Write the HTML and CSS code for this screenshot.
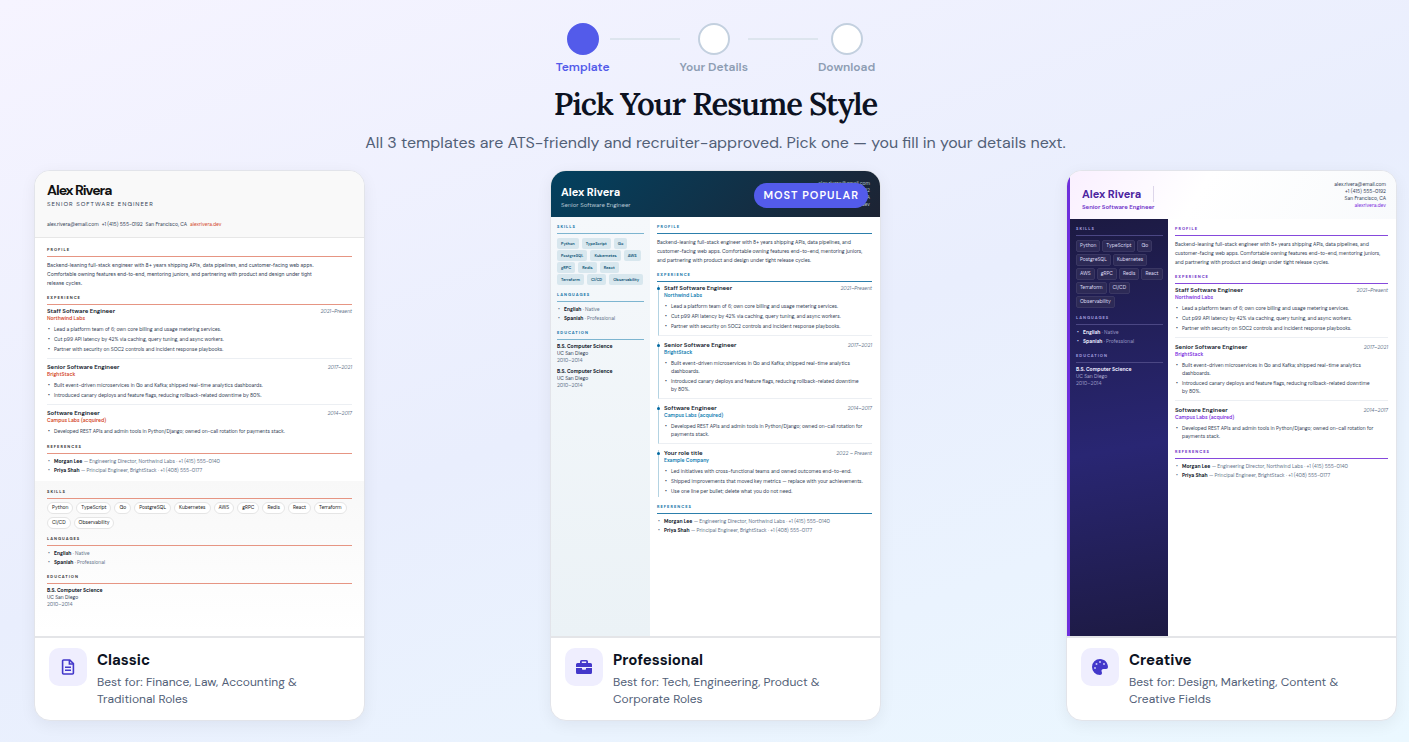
FILE: index.html
```html
<!DOCTYPE html>
<html lang="en">
<head>
  <meta charset="UTF-8">
  <meta name="viewport" content="width=device-width, initial-scale=1.0">
  <title>Pick Your Resume Style</title>
  <link rel="stylesheet" href="styles.css">
</head>
<body>

<div class="page">

  <!-- Progress steps -->
  <ol class="steps">
    <li class="step active"><span class="step-dot"></span><span class="step-label">Template</span></li>
    <li class="step-line"></li>
    <li class="step"><span class="step-dot"></span><span class="step-label">Your Details</span></li>
    <li class="step-line"></li>
    <li class="step"><span class="step-dot"></span><span class="step-label">Download</span></li>
  </ol>

  <h1>Pick Your Resume Style</h1>
  <p class="subtitle">All 3 templates are ATS-friendly and recruiter-approved. Pick one — you fill in your details next.</p>

  <div class="templates">

    <!-- Classic -->
    <article class="card">
      <div class="preview classic">
        <header class="cv-header">
          <div class="cv-name">Alex Rivera</div>
          <div class="cv-title">Senior Software Engineer</div>
          <div class="cv-contact">
            <span>alex.rivera@email.com</span><span>+1 (415) 555-0192</span><span>San Francisco, CA</span><span class="cv-site">alexrivera.dev</span>
          </div>
        </header>
        <div class="cv-main">
          <h3>Profile</h3>
          <p class="cv-text">Backend-leaning full-stack engineer with 8+ years shipping APIs, data pipelines, and customer-facing web apps. Comfortable owning features end-to-end, mentoring juniors, and partnering with product and design under tight release&nbsp;cycles.</p>
          <h3>Experience</h3>
          <div class="job">
            <div class="job-head"><strong>Staff Software Engineer</strong><em>2021–Present</em></div>
            <div class="company">Northwind Labs</div>
            <ul>
              <li>Lead a platform team of 6; own core billing and usage metering services.</li>
              <li>Cut p99 API latency by 42% via caching, query tuning, and async workers.</li>
              <li>Partner with security on SOC2 controls and incident response playbooks.</li>
            </ul>
          </div>
          <div class="job">
            <div class="job-head"><strong>Senior Software Engineer</strong><em>2017–2021</em></div>
            <div class="company">BrightStack</div>
            <ul>
              <li>Built event-driven microservices in Go and Kafka; shipped real-time analytics dashboards.</li>
              <li>Introduced canary deploys and feature flags, reducing rollback-related downtime by 80%.</li>
            </ul>
          </div>
          <div class="job">
            <div class="job-head"><strong>Software Engineer</strong><em>2014–2017</em></div>
            <div class="company">Campus Labs (acquired)</div>
            <ul>
              <li>Developed REST APIs and admin tools in Python/Django; owned on-call rotation for payments stack.</li>
            </ul>
          </div>
          <h3>References</h3>
          <ul class="plain">
            <li><strong>Morgan Lee</strong> — Engineering Director, Northwind Labs · +1 (415) 555-0140</li>
            <li><strong>Priya Shah</strong> — Principal Engineer, BrightStack · +1 (408) 555-0177</li>
          </ul>
        </div>
        <div class="cv-side">
          <h3>Skills</h3>
          <div class="tags">
            <span>Python</span><span>TypeScript</span><span>Go</span><span>PostgreSQL</span><span>Kubernetes</span><span>AWS</span><span>gRPC</span><span>Redis</span><span>React</span><span>Terraform</span><span>CI/CD</span><span>Observability</span>
          </div>
          <h3>Languages</h3>
          <ul class="plain">
            <li><strong>English</strong> · Native</li>
            <li><strong>Spanish</strong> · Professional</li>
          </ul>
          <h3>Education</h3>
          <div class="school"><strong>B.S. Computer Science</strong><span>UC San Diego</span><span class="years">2010–2014</span></div>
        </div>
      </div>
      <div class="card-info">
        <div class="card-icon">
          <svg width="16" height="16" viewBox="0 0 16 16" fill="none" stroke="#4338ca" stroke-width="1.6">
            <path d="M9.8 1H3.600a1 1 0 0 0-1 1v12a1 1 0 0 0 1 1h8.800a1 1 0 0 0 1-1V4.600z"/>
            <path d="M9.400 1v4h4M5 8.200h6M5 11.200h6"/>
          </svg>
        </div>
        <div>
          <h2>Classic</h2>
          <p>Best for: Finance, Law, Accounting &amp; Traditional Roles</p>
        </div>
      </div>
    </article>

    <!-- Professional -->
    <article class="card">
      <span class="badge">Most Popular</span>
      <div class="preview professional">
        <header class="cv-header">
          <div class="cv-person">
            <div class="cv-name">Alex Rivera</div>
            <div class="cv-title">Senior Software Engineer</div>
          </div>
          <div class="cv-contact">
            <span>alex.rivera@email.com</span><span>+1 (415) 555-0192</span><span>San Francisco, CA</span><span class="cv-site">alexrivera.dev</span>
          </div>
        </header>
        <div class="cv-side">
          <h3>Skills</h3>
          <div class="tags">
            <span>Python</span><span>TypeScript</span><span>Go</span><span>PostgreSQL</span><span>Kubernetes</span><span>AWS</span><span>gRPC</span><span>Redis</span><span>React</span><span>Terraform</span><span>CI/CD</span><span>Observability</span>
          </div>
          <h3>Languages</h3>
          <ul class="plain">
            <li><strong>English</strong> · Native</li>
            <li><strong>Spanish</strong> · Professional</li>
          </ul>
          <h3>Education</h3>
          <div class="school"><strong>B.S. Computer Science</strong><span>UC San Diego</span><span class="years">2010–2014</span></div>
          <div class="school"><strong>B.S. Computer Science</strong><span>UC San Diego</span><span class="years">2010–2014</span></div>
        </div>
        <div class="cv-main">
          <h3>Profile</h3>
          <p class="cv-text">Backend-leaning full-stack engineer with 8+ years shipping APIs, data pipelines, and customer-facing web apps. Comfortable owning features end-to-end, mentoring juniors, and partnering with product and design under tight release cycles.</p>
          <h3>Experience</h3>
          <div class="job">
            <div class="job-head"><strong>Staff Software Engineer</strong><em>2021–Present</em></div>
            <div class="company">Northwind Labs</div>
            <ul>
              <li>Lead a platform team of 6; own core billing and usage metering services.</li>
              <li>Cut p99 API latency by 42% via caching, query tuning, and async workers.</li>
              <li>Partner with security on SOC2 controls and incident response playbooks.</li>
            </ul>
          </div>
          <div class="job">
            <div class="job-head"><strong>Senior Software Engineer</strong><em>2017–2021</em></div>
            <div class="company">BrightStack</div>
            <ul>
              <li>Built event-driven microservices in Go and Kafka; shipped real-time analytics dashboards.</li>
              <li>Introduced canary deploys and feature flags, reducing rollback-related downtime by&nbsp;80%.</li>
            </ul>
          </div>
          <div class="job">
            <div class="job-head"><strong>Software Engineer</strong><em>2014–2017</em></div>
            <div class="company">Campus Labs (acquired)</div>
            <ul>
              <li>Developed REST APIs and admin tools in Python/Django; owned on-call rotation for payments stack.</li>
            </ul>
          </div>
          <div class="job">
            <div class="job-head"><strong>Your role title</strong><em>2022 – Present</em></div>
            <div class="company">Example Company</div>
            <ul>
              <li>Led initiatives with cross-functional teams and owned outcomes end-to-end.</li>
              <li>Shipped improvements that moved key metrics — replace with your achievements.</li>
              <li>Use one line per bullet; delete what you do not need.</li>
            </ul>
          </div>
          <h3>References</h3>
          <ul class="plain">
            <li><strong>Morgan Lee</strong> — Engineering Director, Northwind Labs · +1 (415) 555-0140</li>
            <li><strong>Priya Shah</strong> — Principal Engineer, BrightStack · +1 (408) 555-0177</li>
          </ul>
        </div>
      </div>
      <div class="card-info">
        <div class="card-icon">
          <svg width="16" height="16" viewBox="0 0 16 16" fill="#4338ca">
            <path fill-rule="evenodd" d="M5.500 1h5A1.500 1.500 0 0 1 12 2.500V4h2.500A1.500 1.500 0 0 1 16 5.500V8H0V5.500A1.500 1.500 0 0 1 1.500 4H4V2.500A1.500 1.500 0 0 1 5.500 1zM5.800 2.600V4h4.400V2.600z"/>
            <path d="M0 9h6v1a.7.7 0 0 0 .7.700h2.600A.7.7 0 0 0 10 10V9h6v4.500a1.500 1.500 0 0 1-1.500 1.500h-13A1.500 1.500 0 0 1 0 13.500z"/>
          </svg>
        </div>
        <div>
          <h2>Professional</h2>
          <p>Best for: Tech, Engineering, Product &amp; Corporate Roles</p>
        </div>
      </div>
    </article>

    <!-- Creative -->
    <article class="card">
      <div class="preview creative">
        <header class="cv-header">
          <div class="cv-person">
            <div class="cv-name">Alex Rivera</div>
            <div class="cv-title">Senior Software Engineer</div>
          </div>
          <div class="cv-contact">
            <span>alex.rivera@email.com</span><span>+1 (415) 555-0192</span><span>San Francisco, CA</span><span class="cv-site">alexrivera.dev</span>
          </div>
        </header>
        <div class="cv-side">
          <h3>Skills</h3>
          <div class="tags">
            <span>Python</span><span>TypeScript</span><span>Go</span><span>PostgreSQL</span><span>Kubernetes</span><span>AWS</span><span>gRPC</span><span>Redis</span><span>React</span><span>Terraform</span><span>CI/CD</span><span>Observability</span>
          </div>
          <h3>Languages</h3>
          <ul class="plain">
            <li><strong>English</strong> · Native</li>
            <li><strong>Spanish</strong> · Professional</li>
          </ul>
          <h3>Education</h3>
          <div class="school"><strong>B.S. Computer Science</strong><span>UC San Diego</span><span class="years">2010–2014</span></div>
        </div>
        <div class="cv-main">
          <h3>Profile</h3>
          <p class="cv-text">Backend-leaning full-stack engineer with 8+ years shipping APIs, data pipelines, and customer-facing web apps. Comfortable owning features end-to-end, mentoring juniors, and partnering with product and design under tight release cycles.</p>
          <h3>Experience</h3>
          <div class="job">
            <div class="job-head"><strong>Staff Software Engineer</strong><em>2021–Present</em></div>
            <div class="company">Northwind Labs</div>
            <ul>
              <li>Lead a platform team of 6; own core billing and usage metering services.</li>
              <li>Cut p99 API latency by 42% via caching, query tuning, and async workers.</li>
              <li>Partner with security on SOC2 controls and incident response playbooks.</li>
            </ul>
          </div>
          <div class="job">
            <div class="job-head"><strong>Senior Software Engineer</strong><em>2017–2021</em></div>
            <div class="company">BrightStack</div>
            <ul>
              <li>Built event-driven microservices in Go and Kafka; shipped real-time analytics dashboards.</li>
              <li>Introduced canary deploys and feature flags, reducing rollback-related downtime by&nbsp;80%.</li>
            </ul>
          </div>
          <div class="job">
            <div class="job-head"><strong>Software Engineer</strong><em>2014–2017</em></div>
            <div class="company">Campus Labs (acquired)</div>
            <ul>
              <li>Developed REST APIs and admin tools in Python/Django; owned on-call rotation for payments stack.</li>
            </ul>
          </div>
          <h3>References</h3>
          <ul class="plain">
            <li><strong>Morgan Lee</strong> — Engineering Director, Northwind Labs · +1 (415) 555-0140</li>
            <li><strong>Priya Shah</strong> — Principal Engineer, BrightStack · +1 (408) 555-0177</li>
          </ul>
        </div>
      </div>
      <div class="card-info">
        <div class="card-icon">
          <svg width="16" height="16" viewBox="0 0 16 16">
            <path fill="#4338ca" d="M8 0a8 8 0 1 0 0 16c1.200 0 2-.9 2-2 0-.5-.2-1-.4-1.500-.4-1.200.4-2.500 1.900-2.500H14a2 2 0 0 0 2-2C16 3.600 12.400 0 8 0z"/>
            <g fill="#c9c6f7"><circle cx="3" cy="9" r="1"/><circle cx="4.500" cy="5" r="1"/><circle cx="8" cy="3" r="1"/><circle cx="12" cy="5" r="1"/></g>
          </svg>
        </div>
        <div>
          <h2>Creative</h2>
          <p>Best for: Design, Marketing, Content &amp; Creative Fields</p>
        </div>
      </div>
    </article>

  </div>
</div>

</body>
</html>
```

FILE: styles.css
```css
* { margin: 0; padding: 0; box-sizing: border-box; }
body {
  font-family: 'DM Sans', Inter, sans-serif;
  min-height: 100vh;
  background: linear-gradient(160deg, #f6f4ff 0%, #e9eefd 50%, #ebf8ff 100%);
  color: #0c1222;
}
ul, ol { list-style: none; }

.page { padding: 23px 12px 21px 34px; }

/* Steps */
.steps { display: flex; justify-content: center; align-items: flex-start; }
.step { display: flex; flex-direction: column; align-items: center; gap: 4px; }
.step-dot {
  width: 32px; height: 32px;
  border-radius: 50%;
  border: 2px solid #c3d0df;
  background: white;
}
.step-label { font-size: 12px; line-height: 16px; font-weight: 600; color: #8d9db3; }
.step-line { width: 70px; height: 2px; margin-top: 15px; background: #dde5ee; }
.step.active .step-dot { background: #535bea; border-color: #535bea; }
.step.active .step-label { color: #535bea; }

h1 {
  font-family: Lora, 'Liberation Serif', serif;
  font-size: 31px;
  line-height: 40px;
  font-weight: 600;
  letter-spacing: -1px;
  text-align: center;
  margin-top: 9px;
}
.subtitle {
  font-size: 16px;
  line-height: 24px;
  margin: 7px 0 15px;
  text-align: center;
  color: #526077;
}

/* Template cards */
.templates { display: flex; justify-content: space-between; align-items: flex-start; gap: 20px; }
.card {
  position: relative;
  flex: 0 1 331px;
  background: white;
  border: 1px solid #e2e4ea;
  border-radius: 16px;
  box-shadow: 0 4px 16px rgba(15,23,42,0.06);
  overflow: hidden;
}
.badge {
  position: absolute; top: 12px; right: 12px; z-index: 1;
  padding: 0 9px;
  border-radius: 13px;
  background: #535bea;
  color: white;
  font-size: 11px; line-height: 25px; font-weight: 600;
  letter-spacing: 1px;
  text-transform: uppercase;
}
.card-info {
  display: flex;
  gap: 10px;
  padding: 10px 14px 12px;
  border-top: 2px solid #e4e5e8;
}
.card-icon {
  display: flex; align-items: center; justify-content: center;
  flex: none;
  width: 38px; height: 38px;
  border-radius: 10px;
  background: #efeefe;
}
.card-info h2 { font-size: 15px; line-height: 24px; font-weight: 700; }
.card-info p { font-size: 12px; line-height: 17px; margin-top: 2px; color: #526077; }

/* Resume previews */
.preview {
  min-height: 465px;
  font-size: 5px;
  line-height: 7px;
  color: #334155;
}
.preview h3 {
  font-size: 4px;
  line-height: 7px;
  padding-bottom: 3px;
  margin: 6px 0 3px;
  border-bottom: 1px solid;
  letter-spacing: 1px;
  text-transform: uppercase;
}
.preview h3:first-child { margin-top: 0; }
.preview strong { color: #0f172a; }
.cv-name { font-size: 11px; line-height: 16px; font-weight: 700; }
.cv-title { font-size: 6px; line-height: 10px; }
.cv-text { line-height: 9px; padding-top: 1px; }
.job { padding-bottom: 3px; margin-bottom: 6px; border-bottom: 1px solid #eceff3; }
.job:nth-last-of-type(1) { padding-bottom: 0; border-bottom: none; }
.job-head { display: flex; justify-content: space-between; }
.job-head strong { font-size: 6px; font-weight: 600; }
.job-head em { color: #64748b; }
.company { line-height: 8px; margin-bottom: 2px; font-weight: 600; }
.preview li { line-height: 8px; padding: 1px 0 1px 7px; text-indent: -6px; }
.preview li::before {
  content: "•";
  display: inline-block;
  width: 6px;
  text-indent: 0;
}
.preview .plain { color: #64748b; }
.preview .plain li { line-height: 9px; padding: 0 0 0 7px; }
.tags { display: flex; flex-wrap: wrap; }
.school { margin-bottom: 4px; }
.school strong, .school span { display: block; }
.years { color: #64748b; }
.cv-contact span { display: block; }

.classic .cv-header { height: 67px; padding: 10px 12px; background: #f9f9f9; border-bottom: 1px solid #e7e7e7; }
.classic .cv-name { font-size: 14px; line-height: 18px; letter-spacing: -1px; color: #111; }
.classic .cv-title { letter-spacing: 1px; text-transform: uppercase; }
.classic .cv-contact { display: flex; gap: 3px; margin-top: 12px; }
.classic .cv-text { font-family: Inter, sans-serif; padding-right: 10px; }
.classic .cv-site, .classic .company { color: #d4492a; }
.classic .cv-main { padding: 8px 12px 6px; }
.classic .job { margin-bottom: 5px; }
.classic .cv-side { padding: 7px 12px 20px; background: linear-gradient(#f8f8f8, #ffffff); }
.classic h3 { color: #333; border-color: #e69583; }
.classic .tags { gap: 3px; }
.classic .tags span {
  padding: 0 4px;
  line-height: 10px;
  border: 1px solid #e5e5e5;
  border-radius: 6px;
  background: white;
  color: #222;
}

/* Two column layouts */
.professional, .creative {
  display: grid;
  grid-template-columns: 99px 1fr;
  grid-template-rows: auto 1fr;
}
.professional .cv-header, .creative .cv-header {
  grid-column: 1 / -1;
  display: flex;
  justify-content: space-between;
  align-items: center;
  padding: 0 10px;
}
.cv-person { align-self: flex-end; padding-bottom: 7px; }
.professional .cv-contact, .creative .cv-contact { text-align: right; }
.professional .cv-side, .creative .cv-side { padding: 6px; }
.professional .cv-main, .creative .cv-main { padding: 6px 8px 6px 7px; }

.professional .cv-header { height: 46px; background: linear-gradient(135deg, #03415f, #1d2333); color: #b8c8d4; }
.professional .cv-name { color: white; }
.professional .cv-side { background: linear-gradient(#f5f8fb, #ebf2f6); }
.professional h3 { color: #0c70a5; border-color: #2c7fac; }
.professional .cv-side h3 { border-color: #7db5d0; }
.professional .company { color: #0c7bb0; }
.professional .tags { gap: 1px 3px; padding-top: 1px; }
.professional .tags span {
  padding: 0 4px;
  line-height: 11px;
  border-radius: 2px;
  background: #d8e7ee;
  color: #0a5275;
  font-size: 4px;
  font-weight: 600;
}
.professional .job { padding-left: 5px; border-left: 1px solid #b4d3e2; margin-left: 1px; }
.professional .job-head::before {
  content: "";
  width: 3px; height: 3px;
  margin: 2px 4px 0 -7px;
  border-radius: 50%;
  background: #0369a1;
}
.professional .job-head em { margin-left: auto; }

.creative { border-left: 3px solid #6d2fdc; grid-template-columns: 98px 1fr; }
.creative .cv-header { height: 48px; padding-left: 12px; background: linear-gradient(120deg, #faf0ff, #ffffff 40%, #f8fafc); }
.creative .cv-name { color: #4c249f; border-right: 1px solid #ddd6ea; }
.creative .cv-title { font-weight: 600; color: #6d2fc9; }
.creative .cv-site, .creative .company { color: #7c2fe0; }
.creative .cv-side { padding-right: 5px; background: linear-gradient(170deg, #1c1a42, #292673 55%, #1d1a43); color: #a9a6cc; }
.creative .cv-side strong { color: #eeecff; }
.creative .cv-side .plain, .creative .cv-side .years { color: #9997c2; }
.creative .cv-side li::before { color: #cfcdf0; }
.creative h3 { color: #6929c4; border-color: #8649dc; }
.creative .cv-side h3 { color: #aaa2e0; border-color: #4b4784; }
.creative .tags { gap: 2px; padding-top: 1px; }
.creative .tags span {
  padding: 0 3px;
  line-height: 10px;
  border: 1px solid #3a3763;
  border-radius: 2px;
  background: #2d2a56;
  color: #dcdaf2;
}
```
